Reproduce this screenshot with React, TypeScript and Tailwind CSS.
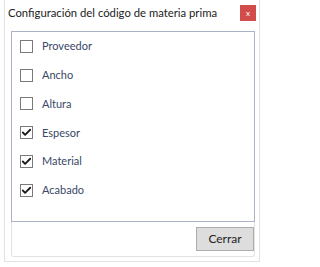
import { Check } from "lucide-react";

const OPTIONS = [
  { label: "Proveedor", checked: false },
  { label: "Ancho", checked: false },
  { label: "Altura", checked: false },
  { label: "Espesor", checked: true },
  { label: "Material", checked: true },
  { label: "Acabado", checked: true },
];

export default function App() {
  return (
    <div className="w-[264px] h-[267px] bg-white px-[4px] font-['Lato',sans-serif]">
      <div className="w-[256px] h-[262px] border-x border-b border-[#e2e2e2] flex flex-col">
        {/* Title bar */}
        <div className="h-[31px] flex items-start justify-between pl-[3px] pr-[3px] pt-[5px]">
          <span className="text-[11.3px] leading-[16px] text-[#222]">
            Configuración del código de materia prima
          </span>
          <button className="w-[16px] h-[16px] bg-[#d24c4c] text-white text-[8px] leading-none flex items-center justify-center">
            x
          </button>
        </div>

        {/* Panel */}
        <div className="ml-[6px] w-[244px] flex flex-col">
          <div className="h-[191px] border border-[#a9b3c4] flex flex-col">
            {OPTIONS.map((o) => (
              <label key={o.label} className="h-[28.8px] flex items-center pl-[8px] gap-[9px]">
                <span className="w-[13px] h-[13px] border border-[#7a7a7a] bg-white flex items-center justify-center">
                  {o.checked && <Check className="w-[11px] h-[11px] text-[#1a1a1a]" strokeWidth={4} />}
                </span>
                <span className="text-[11px] text-[#3a4766]">{o.label}</span>
              </label>
            ))}
          </div>
          <div className="h-[35px] border-x border-b border-[#e2e2e2] rounded-b-[3px] flex justify-end items-start pt-[5px]">
            <button className="w-[58px] h-[24px] bg-[#dddddd] border border-[#adadad] text-[12px] text-[#222]">
              Cerrar
            </button>
          </div>
        </div>
      </div>
    </div>
  );
}
